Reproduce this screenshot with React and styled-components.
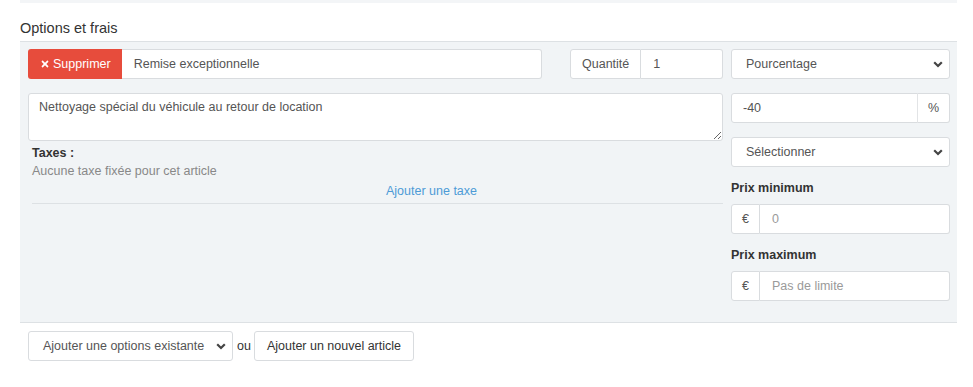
import styled, { createGlobalStyle } from 'styled-components'
import { FaTimes } from 'react-icons/fa'

const GlobalStyle = createGlobalStyle`
    body{
        margin: 0;
        background: #fff;
        font-family: "Liberation Sans", Arial, sans-serif;
        font-size: 12.5px;
        color: #555;
    }
`

const Chevron = () => (
    <svg width="10" height="7" viewBox="0 0 10 7">
        <path d="M1.2 1.2 L5 5 L8.8 1.2" fill="none" stroke="#444" strokeWidth="2.2" />
    </svg>
)

export default function App(){
    return (
        <Page>
            <GlobalStyle />
            <TopBar />
            <Title>Options et frais</Title>

            <Panel>
                <LeftCol>
                    <Row>
                        <Group grow>
                            <DeleteButton><FaTimes size={10} /> Supprimer</DeleteButton>
                            <Field defaultValue="Remise exceptionnelle" />
                        </Group>
                        <Group width="153px">
                            <Addon side="left">Quantité</Addon>
                            <Field defaultValue="1" />
                        </Group>
                    </Row>

                    <Description defaultValue="Nettoyage spécial du véhicule au retour de location" />

                    <Taxes>
                        <TaxLabel>Taxes :</TaxLabel>
                        <TaxNote>Aucune taxe fixée pour cet article</TaxNote>
                        <TaxLink>Ajouter une taxe</TaxLink>
                    </Taxes>
                </LeftCol>

                <RightCol>
                    <SelectBox>
                        <span>Pourcentage</span>
                        <Chevron />
                    </SelectBox>
                    <Group>
                        <Field defaultValue="-40" />
                        <Addon side="right" width="33px">%</Addon>
                    </Group>
                    <SelectBox>
                        <span>Sélectionner</span>
                        <Chevron />
                    </SelectBox>

                    <PriceLabel>Prix minimum</PriceLabel>
                    <Group>
                        <Addon side="left" width="29px">€</Addon>
                        <Field placeholder="0" />
                    </Group>
                    <PriceLabel>Prix maximum</PriceLabel>
                    <Group>
                        <Addon side="left" width="29px">€</Addon>
                        <Field placeholder="Pas de limite" />
                    </Group>
                </RightCol>
            </Panel>

            <Footer>
                <SelectBox width="205px">
                    <span>Ajouter une options existante</span>
                    <Chevron />
                </SelectBox>
                <Or>ou</Or>
                <Button>Ajouter un nouvel article</Button>
            </Footer>
        </Page>
    )
}

const Page = styled.div`
    width: 973px;
    height: 387px;
    overflow: hidden;
`

const TopBar = styled.div`
    height: 3px;
    margin: 0 16px 0 20px;
    background: #f3f5f7;
`

const Title = styled.div`
    padding: 15px 0 0 20px;
    line-height: 20px;
    font-size: 14.5px;
    color: #333;
    margin-bottom: 3px;
`

const Panel = styled.div`
    margin: 0 16px 0 20px;
    background: #f1f4f6;
    border-top: 1px solid #dde1e4;
    border-bottom: 1px solid #dde1e4;
    padding: 7px 7px 21px 8px;
    display: flex;
    gap: 8px;
`

const LeftCol = styled.div`
    flex: 1;
    display: flex;
    flex-direction: column;
`

const RightCol = styled.div`
    width: 219px;
    display: flex;
    flex-direction: column;
    gap: 14px;
`

const Row = styled.div`
    display: flex;
    justify-content: space-between;
    gap: 28px;
    margin-bottom: 14px;
`

const Group = styled.div`
    display: flex;
    height: 30px;
    ${(p) => p.grow && 'flex: 1;'}
    ${(p) => p.width && `width: ${p.width}; flex: none;`}
`

const DeleteButton = styled.button`
    display: flex;
    align-items: center;
    gap: 3px;
    padding: 0 11px 0 12px;
    border: none;
    border-radius: 3px 0 0 3px;
    background: #e74c3c;
    color: #fff;
    font-family: inherit;
    font-size: 12.5px;
`

const Field = styled.input`
    flex: 1;
    min-width: 0;
    height: 30px;
    box-sizing: border-box;
    border: 1px solid #d9dcdf;
    background: #fff;
    padding: 0 11px;
    font-family: inherit;
    font-size: 12.5px;
    color: #555;
    border-radius: 3px;
    outline: none;

    &:not(:first-child){
        border-top-left-radius: 0;
        border-bottom-left-radius: 0;
        border-left: none;
        padding-left: 12px;
    }
    &:not(:last-child){
        border-top-right-radius: 0;
        border-bottom-right-radius: 0;
    }
    &::placeholder{
        color: #9a9a9a;
    }
`

const Addon = styled.div`
    display: flex;
    align-items: center;
    justify-content: center;
    box-sizing: border-box;
    ${(p) => p.width ? `width: ${p.width};` : 'padding: 0 11px;'}
    background: #fff;
    border: 1px solid #d9dcdf;
    color: #555;
    border-radius: ${(p) => p.side === 'left' ? '3px 0 0 3px' : '0 3px 3px 0'};
    ${(p) => p.side === 'right' && 'border-left: 1px solid #e2e4e6;'}
    ${(p) => p.side === 'right' && 'margin-left: -1px;'}
`

const SelectBox = styled.div`
    display: flex;
    align-items: center;
    justify-content: space-between;
    box-sizing: border-box;
    height: 30px;
    ${(p) => p.width && `width: ${p.width};`}
    padding: 0 6px 0 14px;
    background: #fff;
    border: 1px solid #d9dcdf;
    border-radius: 3px;
    color: #555;
`

const Description = styled.textarea`
    height: 48px;
    box-sizing: border-box;
    border: 1px solid #d9dcdf;
    border-radius: 3px;
    padding: 6px 10px;
    font-family: inherit;
    font-size: 12.5px;
    color: #555;
    resize: vertical;
    outline: none;
`

const Taxes = styled.div`
    margin: 3px 0 0 4px;
    line-height: 18px;
    border-bottom: 1px solid #dde1e4;
    padding-bottom: 3px;
`

const TaxLabel = styled.div`
    font-weight: bold;
    color: #333;
`

const TaxNote = styled.div`
    color: #888;
`

const TaxLink = styled.div`
    margin-top: 2px;
    padding-left: 108px;
    text-align: center;
    color: #4d9bd6;
`

const PriceLabel = styled.div`
    font-weight: bold;
    color: #333;
    line-height: 18px;
    margin: -2px 0 -7px;
`

const Footer = styled.div`
    display: flex;
    align-items: center;
    padding: 8px 0 0 28px;
`

const Or = styled.span`
    margin: 0 3px 0 4px;
    color: #333;
`

const Button = styled.button`
    height: 30px;
    padding: 0 12px;
    background: #fff;
    border: 1px solid #d9dcdf;
    border-radius: 3px;
    font-family: inherit;
    font-size: 12.5px;
    color: #333;
`
